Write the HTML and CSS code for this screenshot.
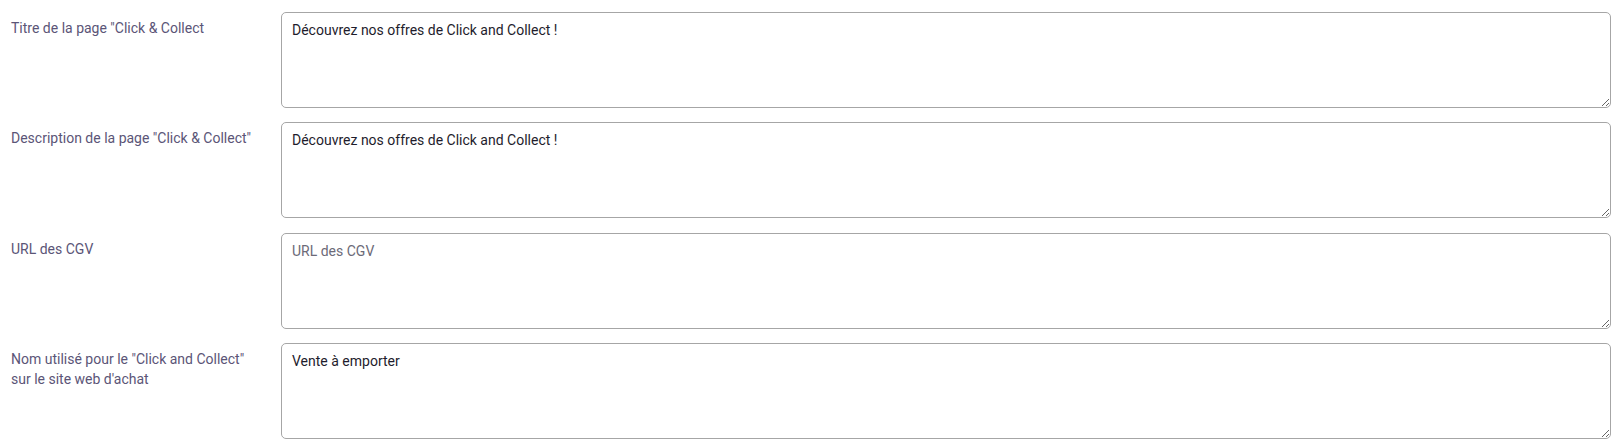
FILE: index.html
```html
<!DOCTYPE html>
<html lang="fr">
<head>
  <meta charset="UTF-8" />
  <title>Click &amp; Collect</title>
  <link rel="stylesheet" href="styles.css">
</head>
<body>
  <form class="settings-form">
    <div class="form-row">
      <label class="form-label" for="title">Titre de la page "Click &amp; Collect</label>
      <textarea class="form-field" id="title">Découvrez nos offres de Click and Collect !</textarea>
    </div>
    <div class="form-row">
      <label class="form-label" for="description">Description de la page "Click &amp; Collect"</label>
      <textarea class="form-field" id="description">Découvrez nos offres de Click and Collect !</textarea>
    </div>
    <div class="form-row">
      <label class="form-label" for="cgv">URL des CGV</label>
      <textarea class="form-field" id="cgv" placeholder="URL des CGV"></textarea>
    </div>
    <div class="form-row">
      <label class="form-label" for="name">Nom utilisé pour le "Click and Collect" sur le site web d'achat</label>
      <textarea class="form-field" id="name">Vente à emporter</textarea>
    </div>
  </form>
</body>
</html>
```

FILE: styles.css
```css
* { margin: 0; padding: 0; box-sizing: border-box; }

body {
  background: #ffffff;
  font-family: Roboto, "Noto Sans", sans-serif;
  font-size: 14px;
}

.settings-form {
  display: flex;
  flex-direction: column;
  gap: 14.4px;
  padding: 12px 6px 0 11px;
}

.form-row {
  display: grid;
  grid-template-columns: 270px 1fr;
  align-items: start;
}

.form-label {
  padding-top: 6px;
  padding-right: 20px;
  line-height: 20px;
  color: #5b5577;
}

.form-field {
  display: block;
  width: 100%;
  height: 96px;
  padding: 7px 10px;
  border: 1px solid #a6a6a6;
  border-radius: 5px;
  font-family: Roboto, "Noto Sans", sans-serif;
  font-size: 14px;
  line-height: 20px;
  color: #1e1c2c;
  background: #ffffff;
  resize: vertical;
}

.form-field::placeholder {
  color: #6c6a78;
  opacity: 1;
}
```
